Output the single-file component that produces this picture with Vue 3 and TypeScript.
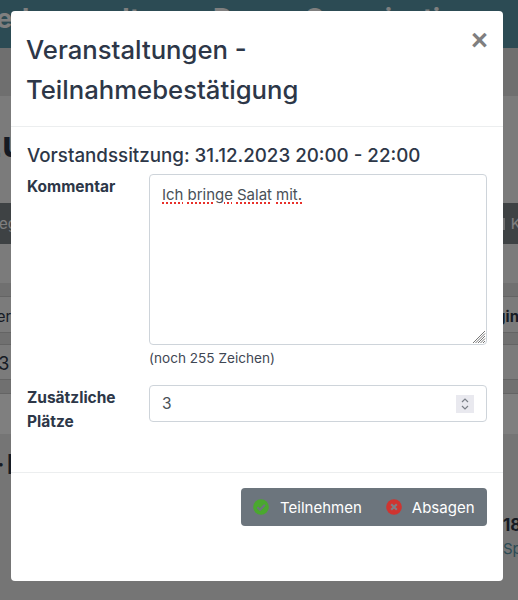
<script setup lang="ts">
const title = "Veranstaltungen - Teilnahmebestätigung";
const comment = ["Ich", "bringe", "Salat", "mit."];
</script>

<template>
  <div class="screen">
    <div class="page" aria-hidden="true">
      <header class="top">
        <span class="brand-a">Feed verwaltung</span>
        <span class="brand-b">Demo Organisation</span>
      </header>
      <div class="subnav"></div>
      <div class="headline"><span>Anzu</span></div>
      <div class="toolbar">
        <span>Termin anlegen</span>
        <span class="toolbar-right"><i class="grid"></i>Kalender</span>
      </div>
      <div class="gap-a"></div>
      <div class="thead"></div>
      <div class="trow names"><span>Gefiltert</span><b>Login</b></div>
      <div class="thead short"></div>
      <div class="trow count"><span>13</span></div>
      <div class="thead"></div>
      <div class="tfoot"></div>
      <div class="lower">
        <div class="lower-left"><span class="dot">·</span><b>Mitglied</b></div>
        <div class="lower-right"><b>18.12.2023</b><span>Sport</span></div>
      </div>
    </div>

    <div class="backdrop"></div>

    <section class="modal" role="dialog">
      <div class="modal-head">
        <h1>{{ title }}</h1>
        <button class="close" type="button">×</button>
      </div>

      <div class="modal-body">
        <h2>Vorstandssitzung: 31.12.2023 20:00 - 22:00</h2>

        <div class="field">
          <label>Kommentar</label>
          <div class="control">
            <div class="textarea">
              <span v-for="word in comment" :key="word" class="misspelt">{{ word }}</span>
              <svg class="grip" width="14" height="14" viewBox="0 0 14 14">
                <path d="M13 1 1 13M13 3.5 3.5 13M13 6 6 13M13 8.5 8.5 13M13 11 11 13" stroke="#777" stroke-width="1" fill="none" />
              </svg>
            </div>
            <small>(noch 255 Zeichen)</small>
          </div>
        </div>

        <div class="field second">
          <label>Zusätzliche Plätze</label>
          <div class="control">
            <div class="number">
              <span>3</span>
              <span class="spin">
                <svg width="18" height="18" viewBox="0 0 18 18">
                  <path d="M6 7 9 4l3 3M6 11l3 3 3-3" stroke="#7a7f87" stroke-width="1.2" fill="none" />
                </svg>
              </span>
            </div>
          </div>
        </div>
      </div>

      <div class="modal-foot">
        <div class="btn-group">
          <button type="button" class="btn">
            <svg width="16" height="16" viewBox="0 0 16 16">
              <circle cx="8" cy="8" r="7.8" fill="#4aa82e" />
              <path d="M4.3 8.2 7 10.8l4.8-5" stroke="#6c757d" stroke-width="2.2" fill="none" />
            </svg>
            Teilnehmen
          </button>
          <button type="button" class="btn">
            <svg width="16" height="16" viewBox="0 0 16 16">
              <circle cx="8" cy="8" r="7.8" fill="#cf3430" />
              <path d="m5.2 5.2 5.6 5.6m0-5.6-5.6 5.6" stroke="#7d7f85" stroke-width="2.2" fill="none" />
            </svg>
            Absagen
          </button>
        </div>
      </div>
    </section>
  </div>
</template>

<style>
html,
body {
  margin: 0;
  overflow: hidden;
}
</style>

<style scoped>
.screen {
  position: relative;
  width: 518px;
  height: 600px;
  overflow: hidden;
  font-family: Inter, "Liberation Sans", sans-serif;
  color: #2d3748;
  background: #f6f6f6;
}

/* page underneath the dialog */
.page {
  display: flex;
  flex-direction: column;
  height: 600px;
}
.top {
  height: 48px;
  background: #5896a8;
  color: #fff;
  font-size: 27px;
  font-weight: 700;
  line-height: 38px;
  white-space: nowrap;
  display: flex;
}
.brand-a {
  flex: none;
  width: 248px;
  margin-left: -35px;
  word-spacing: 5px;
}
.brand-b {
  flex: none;
  word-spacing: 8px;
}
.subnav {
  height: 48px;
  background: #dedede;
}
.headline {
  height: 107px;
  font-size: 36px;
  font-weight: 700;
  line-height: 96px;
  white-space: nowrap;
}
.headline span {
  display: block;
  margin-left: -68px;
}
.toolbar {
  height: 41px;
  background: #7c8489;
  color: #fff;
  font-size: 15px;
  line-height: 41px;
  display: flex;
  justify-content: space-between;
  white-space: nowrap;
}
.toolbar > span:first-child {
  margin-left: -75px;
}
.toolbar-right {
  display: flex;
  align-items: center;
  gap: 6px;
  margin-right: -56px;
}
.grid {
  width: 8px;
  height: 12px;
  background: #dcdcdc;
}
.gap-a {
  height: 39px;
}
.thead {
  height: 14px;
  background: #e0e0e0;
  border-bottom: 1px solid #c8c8c8;
  box-sizing: border-box;
}
.thead.short {
  height: 12px;
}
.trow {
  background: #f6f6f6;
  display: flex;
  justify-content: space-between;
  white-space: nowrap;
  font-size: 15px;
  border-bottom: 1px solid #c8c8c8;
  box-sizing: border-box;
}
.names {
  height: 36px;
  line-height: 40px;
}
.names span {
  margin-left: -41px;
}
.names b {
  margin-right: -1px;
}
.count {
  height: 35px;
  line-height: 37px;
  font-size: 18px;
}
.count span {
  margin-left: -9px;
}
.tfoot {
  height: 40px;
  background: #fff;
}
.lower {
  flex: 1;
  background: #ebebeb;
  display: flex;
  justify-content: space-between;
  white-space: nowrap;
}
.lower-left {
  padding-top: 16px;
  margin-left: -3px;
  font-size: 27px;
  line-height: 30px;
}
.lower-left .dot {
  margin-right: 2px;
}
.lower-right {
  display: flex;
  flex-direction: column;
  align-items: flex-start;
  width: 15px;
  padding-top: 79px;
  font-size: 17px;
  line-height: 24px;
}
.lower-right span {
  color: #5896a8;
  font-size: 15px;
}
.backdrop {
  position: absolute;
  inset: 0;
  background: rgba(0, 0, 0, 0.5);
}

/* dialog */
.modal {
  position: absolute;
  left: 11px;
  top: 11px;
  width: 492px;
  height: 570px;
  background: #fff;
  border-radius: 4px;
  display: flex;
  flex-direction: column;
}
.modal-head {
  height: 116px;
  box-sizing: border-box;
  padding: 19px 16px 0;
  border-bottom: 1px solid #eceeef;
  display: flex;
  justify-content: space-between;
  align-items: flex-start;
}
h1 {
  margin: 0 0 0 -1px;
  width: 320px;
  font-size: 25.7px;
  font-weight: 500;
  line-height: 40px;
}
.close {
  border: 0;
  background: none;
  padding: 0;
  margin: -3px -1px 0 0;
  font-family: "Liberation Sans", sans-serif;
  font-size: 29px;
  font-weight: 700;
  line-height: 27px;
  color: #7f7f7f;
}
.modal-body {
  flex: 1;
  padding: 17px 16px 0;
}
h2 {
  margin: 0 0 7px;
  font-size: 18.75px;
  font-weight: 500;
  line-height: 23px;
}
.field {
  display: grid;
  grid-template-columns: 122px 338px;
}
.field.second {
  margin-top: 18px;
}
label {
  padding-top: 1px;
  font-size: 15.5px;
  font-weight: 700;
  line-height: 24px;
}
.control {
  display: flex;
  flex-direction: column;
}
.textarea {
  position: relative;
  box-sizing: border-box;
  height: 171px;
  padding: 8px 12px;
  border: 1px solid #ced4da;
  border-radius: 4px;
  font-size: 15px;
  line-height: 24px;
  color: #495057;
  display: flex;
  gap: 4px;
  align-items: flex-start;
}
.misspelt {
  text-decoration: underline dotted #e8302a 1.5px;
  text-underline-offset: 2px;
}
.grip {
  position: absolute;
  right: 0;
  bottom: 0;
}
small {
  margin-top: 4px;
  font-size: 13.6px;
  line-height: 18px;
  color: #3f4754;
}
.number {
  box-sizing: border-box;
  height: 37px;
  padding: 0 12px;
  border: 1px solid #ced4da;
  border-radius: 4px;
  font-size: 15.5px;
  color: #495057;
  display: flex;
  align-items: center;
  justify-content: space-between;
}
.spin {
  width: 18px;
  height: 18px;
  background: #e9e9ef;
}
.spin svg {
  display: block;
}
.modal-foot {
  height: 109px;
  box-sizing: border-box;
  padding-top: 15px;
  padding-right: 16px;
  border-top: 1px solid #eceeef;
  display: flex;
  justify-content: flex-end;
  align-items: flex-start;
}
.btn-group {
  display: flex;
  height: 38px;
  background: #6c757d;
  border-radius: 4px;
}
.btn {
  display: flex;
  align-items: center;
  gap: 10px;
  border: 0;
  background: none;
  padding: 0 12.5px;
  font: inherit;
  font-size: 15px;
  color: #fff;
}
.btn:first-child {
  gap: 11px;
  padding-right: 11.5px;
}
</style>
